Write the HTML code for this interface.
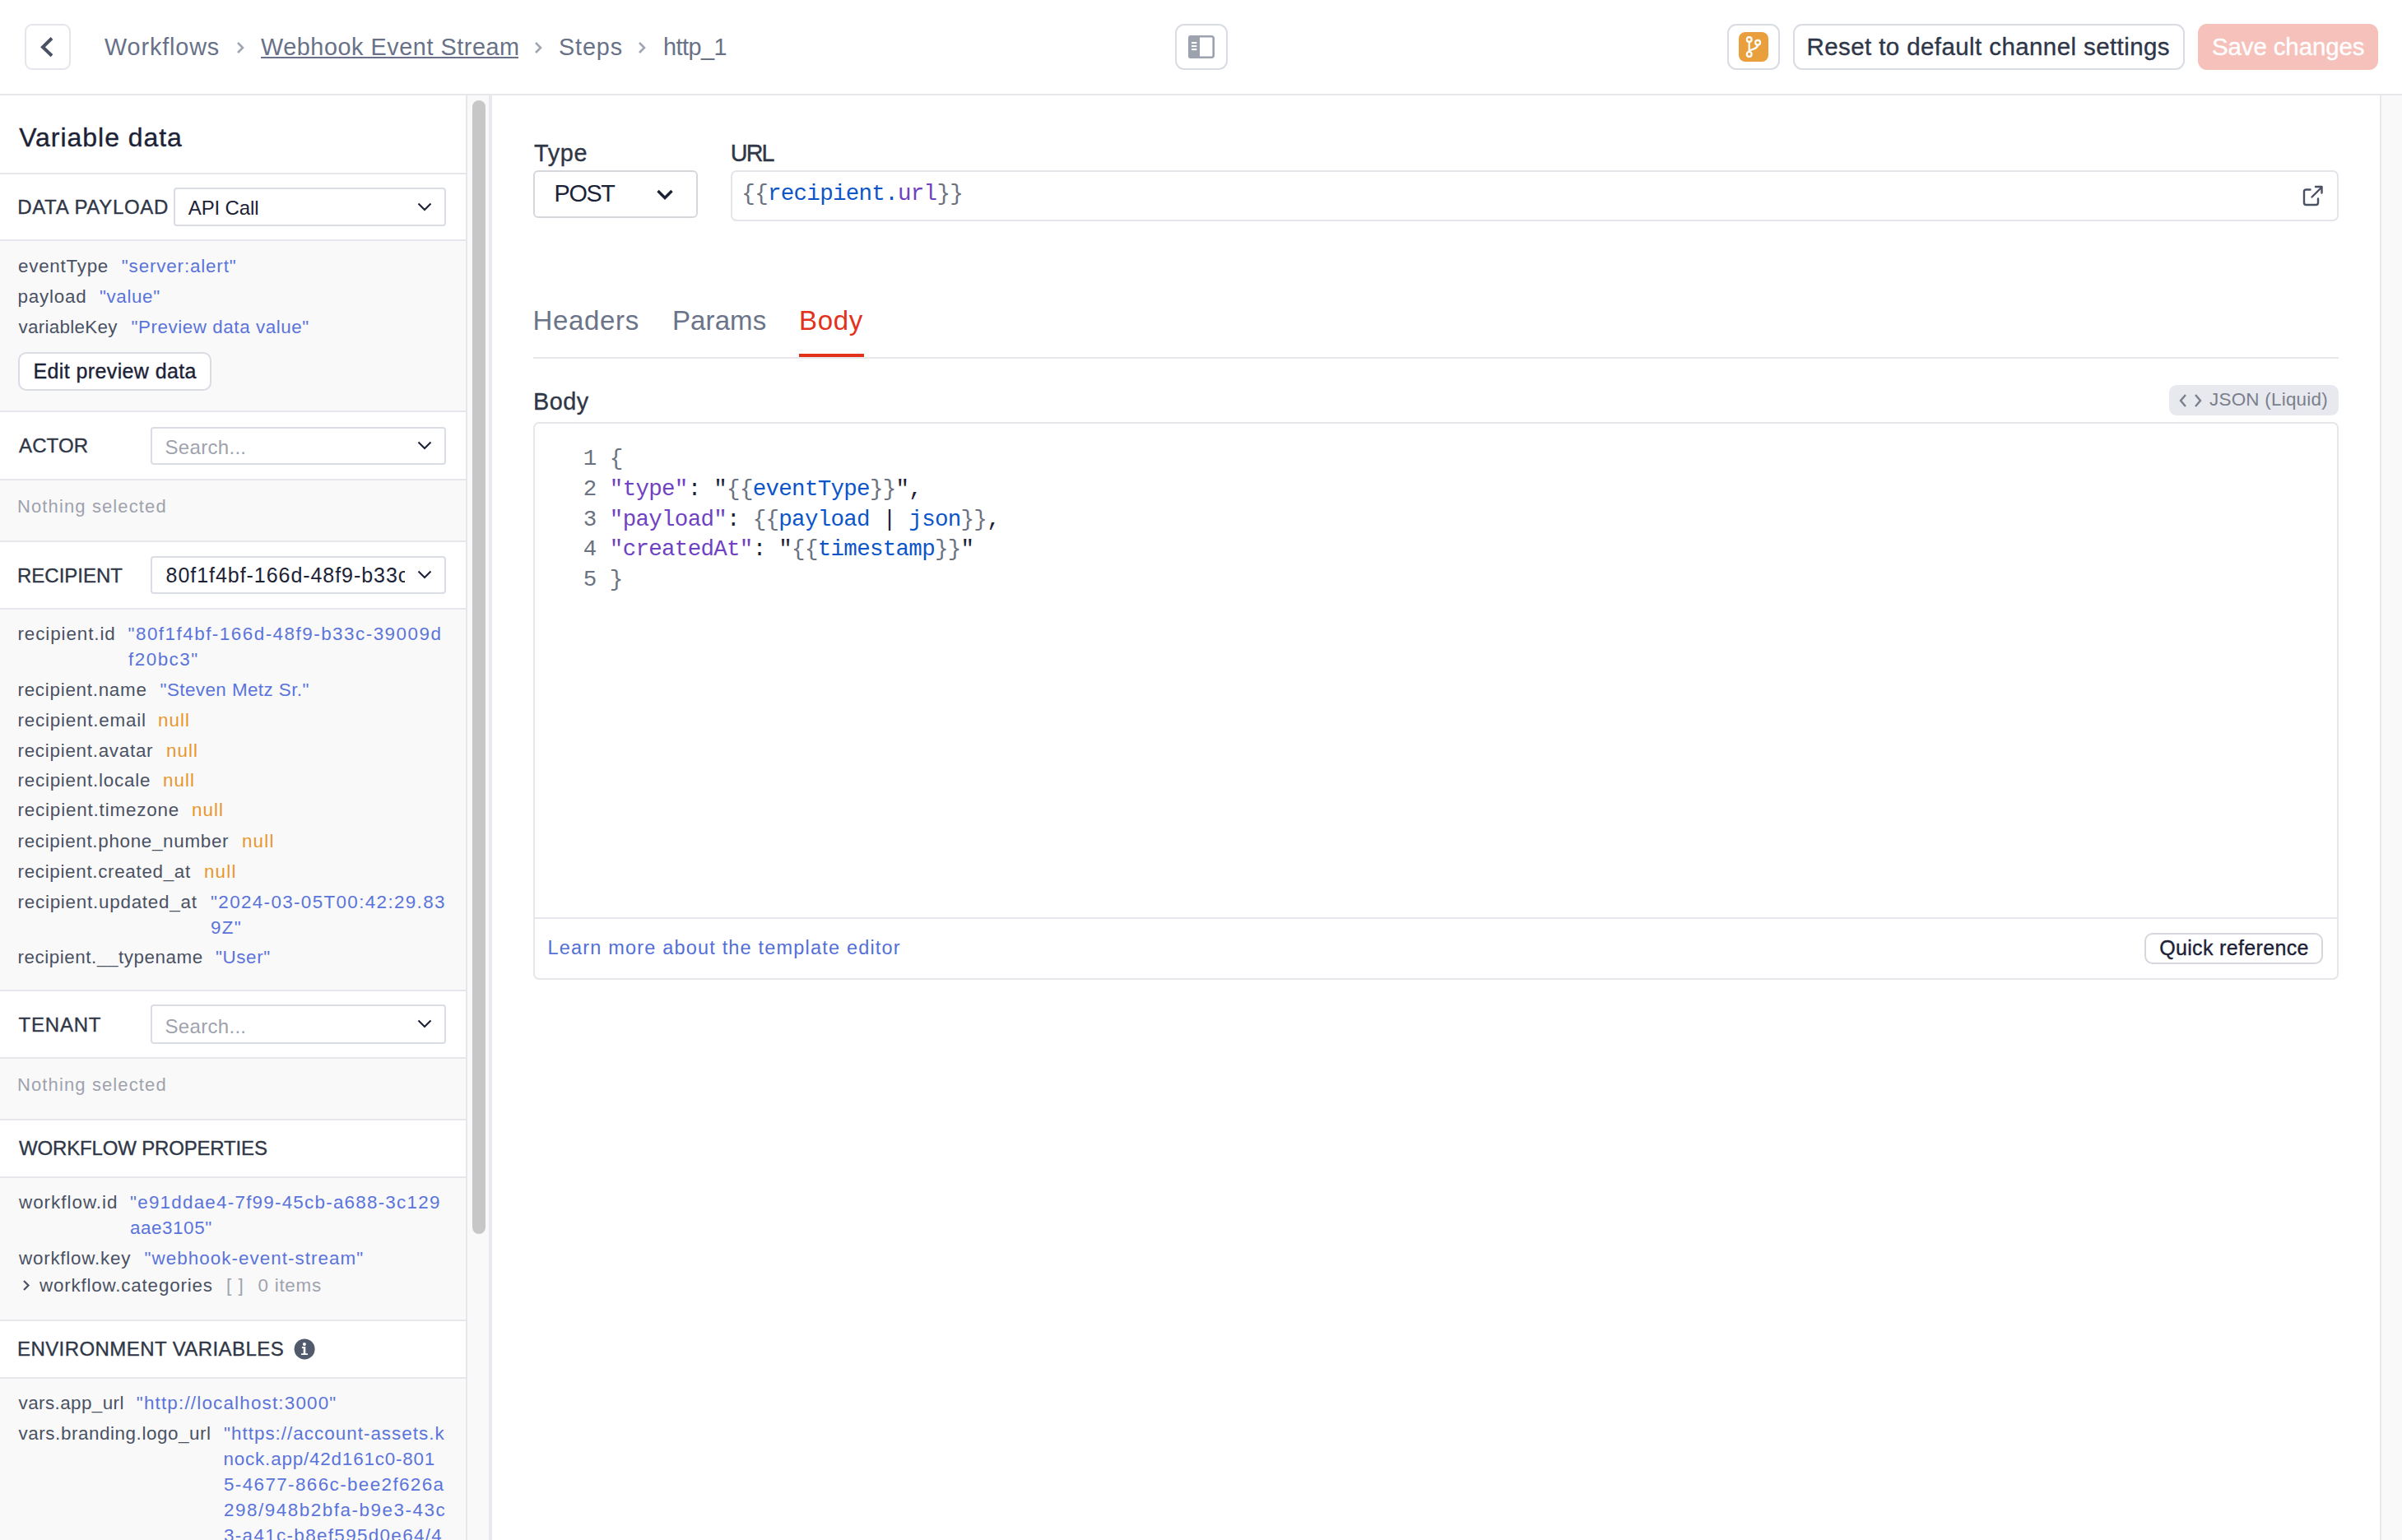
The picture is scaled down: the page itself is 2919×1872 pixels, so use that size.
<!DOCTYPE html>
<html><head><meta charset="utf-8"><title>http_1</title>
<style>
html,body{margin:0;padding:0;}
body{width:2919px;height:1872px;position:relative;overflow:hidden;background:#fff;font-family:"Liberation Sans",sans-serif;}
.a{position:absolute;}
.bb{box-sizing:border-box;}
.t{white-space:pre;}
</style></head><body>
<div class="a bb" style="left:0px;top:114px;width:2919px;height:2px;background:#e5e7eb;"></div>
<div class="a bb" style="left:30px;top:29px;width:56px;height:56px;border:2px solid #e4e6eb;border-radius:9px;"></div>
<svg class="a" style="left:0;top:0" width="120" height="120"><polyline points="63,46.5 52,57.2 63,67.8" fill="none" stroke="#4a5163" stroke-width="4"/></svg>
<div class="a t" style="left:127.00px;top:39.02px;font-size:28.8px;line-height:36px;color:#687187;letter-spacing:0.875px;font-weight:400;font-family:'Liberation Sans',sans-serif;">Workflows</div>
<div class="a t" style="left:317.00px;top:39.02px;font-size:28.8px;line-height:36px;color:#687187;letter-spacing:0.553px;font-weight:400;font-family:'Liberation Sans',sans-serif;">Webhook Event Stream</div>
<div class="a bb" style="left:317px;top:69px;width:313px;height:2px;background:#687187;"></div>
<div class="a t" style="left:679.00px;top:39.02px;font-size:28.8px;line-height:36px;color:#687187;letter-spacing:0.875px;font-weight:400;font-family:'Liberation Sans',sans-serif;">Steps</div>
<div class="a t" style="left:806.00px;top:39.02px;font-size:28.8px;line-height:36px;color:#687187;letter-spacing:-0.500px;font-weight:400;font-family:'Liberation Sans',sans-serif;">http_1</div>
<svg class="a" style="left:286px;top:48px" width="16" height="20"><polyline points="3,4 9,10 3,16" fill="none" stroke="#a0a6b1" stroke-width="2.6"/></svg>
<svg class="a" style="left:648px;top:48px" width="16" height="20"><polyline points="3,4 9,10 3,16" fill="none" stroke="#a0a6b1" stroke-width="2.6"/></svg>
<svg class="a" style="left:774px;top:48px" width="16" height="20"><polyline points="3,4 9,10 3,16" fill="none" stroke="#a0a6b1" stroke-width="2.6"/></svg>
<div class="a bb" style="left:1428px;top:29px;width:64px;height:56px;border:2px solid #d9dce3;border-radius:11px;"></div>
<svg class="a" style="left:1440px;top:40px" width="40" height="34" viewBox="0 0 40 34">
<rect x="5.3" y="4.3" width="29.4" height="25.4" rx="2.5" fill="none" stroke="#9ca3af" stroke-width="2.6"/>
<rect x="4" y="3" width="14" height="28" rx="3" fill="#9ca3af"/>
<rect x="8" y="11" width="6.3" height="2.1" fill="#fff"/><rect x="8" y="15" width="6.3" height="2.1" fill="#fff"/><rect x="8" y="19" width="6.3" height="2.1" fill="#fff"/>
</svg>
<div class="a bb" style="left:2099px;top:29px;width:64px;height:56px;border:2px solid #d9dce3;border-radius:11px;"></div>
<div class="a bb" style="left:2113px;top:39px;width:36px;height:36px;background:#e9a03c;border-radius:8px;"></div>
<svg class="a" style="left:2113px;top:39px" width="36" height="36" viewBox="0 0 36 36">
<g fill="none" stroke="#fff" stroke-width="2.2">
<circle cx="12.7" cy="9" r="2.9"/><circle cx="23.1" cy="12.7" r="2.9"/><circle cx="12.7" cy="26.9" r="2.9"/>
<path d="M12.7 11.9 V24"/><path d="M23.1 15.6 C23.1 20 18 20.5 12.7 22.5"/>
</g></svg>
<div class="a bb" style="left:2179px;top:29px;width:476px;height:56px;border:2px solid #d9dce3;border-radius:11px;"></div>
<div class="a t" style="left:2195.50px;top:38.28px;font-size:29.5px;line-height:37px;color:#2e3648;letter-spacing:0.406px;font-weight:400;font-family:'Liberation Sans',sans-serif;-webkit-text-stroke:0.35px #2e3648;">Reset to default channel settings</div>
<div class="a bb" style="left:2671px;top:29px;width:219px;height:56px;background:#f7c1bb;border-radius:11px;"></div>
<div class="a t" style="left:2688.00px;top:38.28px;font-size:29.5px;line-height:37px;color:#ffffff;letter-spacing:-0.136px;font-weight:400;font-family:'Liberation Sans',sans-serif;-webkit-text-stroke:0.35px #ffffff;">Save changes</div>
<div class="a bb" style="left:566px;top:116px;width:2px;height:1756px;background:#e5e7eb;"></div>
<div class="a bb" style="left:568px;top:116px;width:26px;height:1756px;background:#f9f9f9;"></div>
<div class="a bb" style="left:594px;top:116px;width:4px;height:1756px;background:#e9eaee;"></div>
<div class="a bb" style="left:574px;top:122px;width:16px;height:1378px;background:#c6c7c6;border-radius:8px;"></div>
<div class="a bb" style="left:2892px;top:116px;width:2px;height:1756px;background:#e9eaee;"></div>
<div class="a bb" style="left:2894px;top:116px;width:25px;height:1756px;background:#f9f9fa;"></div>
<div class="a bb" style="left:0px;top:293px;width:566px;height:207px;background:#f9f9fa;"></div>
<div class="a bb" style="left:0px;top:584px;width:566px;height:74px;background:#f9f9fa;"></div>
<div class="a bb" style="left:0px;top:741px;width:566px;height:463px;background:#f9f9fa;"></div>
<div class="a bb" style="left:0px;top:1287px;width:566px;height:74px;background:#f9f9fa;"></div>
<div class="a bb" style="left:0px;top:1432px;width:566px;height:173px;background:#f9f9fa;"></div>
<div class="a bb" style="left:0px;top:1676px;width:566px;height:196px;background:#f9f9fa;"></div>
<div class="a bb" style="left:0px;top:210px;width:566px;height:2px;background:#e5e7eb;"></div>
<div class="a bb" style="left:0px;top:291px;width:566px;height:2px;background:#e5e7eb;"></div>
<div class="a bb" style="left:0px;top:499px;width:566px;height:2px;background:#e5e7eb;"></div>
<div class="a bb" style="left:0px;top:582px;width:566px;height:2px;background:#e5e7eb;"></div>
<div class="a bb" style="left:0px;top:657px;width:566px;height:2px;background:#e5e7eb;"></div>
<div class="a bb" style="left:0px;top:739px;width:566px;height:2px;background:#e5e7eb;"></div>
<div class="a bb" style="left:0px;top:1203px;width:566px;height:2px;background:#e5e7eb;"></div>
<div class="a bb" style="left:0px;top:1285px;width:566px;height:2px;background:#e5e7eb;"></div>
<div class="a bb" style="left:0px;top:1360px;width:566px;height:2px;background:#e5e7eb;"></div>
<div class="a bb" style="left:0px;top:1430px;width:566px;height:2px;background:#e5e7eb;"></div>
<div class="a bb" style="left:0px;top:1604px;width:566px;height:2px;background:#e5e7eb;"></div>
<div class="a bb" style="left:0px;top:1674px;width:566px;height:2px;background:#e5e7eb;"></div>
<div class="a t" style="left:23.20px;top:146.91px;font-size:32px;line-height:40px;color:#1c2236;letter-spacing:0.958px;font-weight:400;font-family:'Liberation Sans',sans-serif;-webkit-text-stroke:0.35px #1c2236;">Variable data</div>
<div class="a t" style="left:21.20px;top:236.68px;font-size:24px;line-height:30px;color:#2f3747;letter-spacing:0.682px;font-weight:400;font-family:'Liberation Sans',sans-serif;-webkit-text-stroke:0.35px #2f3747;">DATA PAYLOAD</div>
<div class="a bb" style="left:211px;top:228px;width:331px;height:47px;background:#fff;border:2px solid #dadde3;border-radius:4px;"></div>
<svg class="a" style="left:504px;top:241.5px" width="24" height="20"><polyline points="4.5,5.5 12,13 19.5,5.5" fill="none" stroke="#1c2236" stroke-width="2.1"/></svg>
<div class="a t" style="left:228.80px;top:237.68px;font-size:24px;line-height:30px;color:#1c2236;letter-spacing:-0.143px;font-weight:400;font-family:'Liberation Sans',sans-serif;">API Call</div>
<div class="a t" style="left:22.00px;top:310.24px;font-size:22.4px;line-height:28px;color:#4a5163;letter-spacing:0.750px;font-weight:400;font-family:'Liberation Sans',sans-serif;">eventType</div>
<div class="a t" style="left:147.80px;top:310.24px;font-size:22.4px;line-height:28px;color:#5b74d9;letter-spacing:0.846px;font-weight:400;font-family:'Liberation Sans',sans-serif;">"server:alert"</div>
<div class="a t" style="left:21.50px;top:346.74px;font-size:22.4px;line-height:28px;color:#4a5163;letter-spacing:0.783px;font-weight:400;font-family:'Liberation Sans',sans-serif;">payload</div>
<div class="a t" style="left:120.90px;top:346.74px;font-size:22.4px;line-height:28px;color:#5b74d9;letter-spacing:0.633px;font-weight:400;font-family:'Liberation Sans',sans-serif;">"value"</div>
<div class="a t" style="left:22.50px;top:383.54px;font-size:22.4px;line-height:28px;color:#4a5163;letter-spacing:0.290px;font-weight:400;font-family:'Liberation Sans',sans-serif;">variableKey</div>
<div class="a t" style="left:159.50px;top:383.54px;font-size:22.4px;line-height:28px;color:#5b74d9;letter-spacing:0.558px;font-weight:400;font-family:'Liberation Sans',sans-serif;">"Preview data value"</div>
<div class="a bb" style="left:22px;top:428px;width:235px;height:47px;background:#fff;border:2px solid #d9dce3;border-radius:10px;"></div>
<div class="a t" style="left:40.50px;top:435.84px;font-size:25px;line-height:31px;color:#1c2236;letter-spacing:0.387px;font-weight:400;font-family:'Liberation Sans',sans-serif;-webkit-text-stroke:0.35px #1c2236;">Edit preview data</div>
<div class="a t" style="left:23.00px;top:526.68px;font-size:24px;line-height:30px;color:#2f3747;letter-spacing:0.125px;font-weight:400;font-family:'Liberation Sans',sans-serif;-webkit-text-stroke:0.35px #2f3747;">ACTOR</div>
<div class="a bb" style="left:183px;top:519px;width:359px;height:46px;background:#fff;border:2px solid #dadde3;border-radius:4px;"></div>
<svg class="a" style="left:504px;top:532.0px" width="24" height="20"><polyline points="4.5,5.5 12,13 19.5,5.5" fill="none" stroke="#1c2236" stroke-width="2.1"/></svg>
<div class="a t" style="left:200.50px;top:528.68px;font-size:24px;line-height:30px;color:#9fa3ad;letter-spacing:0.312px;font-weight:400;font-family:'Liberation Sans',sans-serif;">Search...</div>
<div class="a t" style="left:21.00px;top:602.38px;font-size:22px;line-height:28px;color:#9fa3ad;letter-spacing:1.117px;font-weight:400;font-family:'Liberation Sans',sans-serif;">Nothing selected</div>
<div class="a t" style="left:21.00px;top:684.68px;font-size:24px;line-height:30px;color:#2f3747;letter-spacing:0.000px;font-weight:400;font-family:'Liberation Sans',sans-serif;-webkit-text-stroke:0.35px #2f3747;">RECIPIENT</div>
<div class="a bb" style="left:183px;top:676px;width:359px;height:46px;background:#fff;border:2px solid #dadde3;border-radius:4px;"></div>
<svg class="a" style="left:504px;top:689.0px" width="24" height="20"><polyline points="4.5,5.5 12,13 19.5,5.5" fill="none" stroke="#1c2236" stroke-width="2.1"/></svg>
<div class="a" style="left:185px;top:678px;width:307px;height:42px;overflow:hidden">
<div class="a t" style="left:16.60px;top:5.84px;font-size:25px;line-height:31px;color:#1c2236;letter-spacing:0.950px;font-weight:400;font-family:'Liberation Sans',sans-serif;">80f1f4bf-166d-48f9-b33c-39009df20bc3</div>
</div>
<div class="a t" style="left:21.50px;top:757.14px;font-size:22.4px;line-height:28px;color:#4a5163;letter-spacing:0.909px;font-weight:400;font-family:'Liberation Sans',sans-serif;">recipient.id</div>
<div class="a t" style="left:155.50px;top:757.14px;font-size:22.4px;line-height:28px;color:#5b74d9;letter-spacing:1.500px;font-weight:400;font-family:'Liberation Sans',sans-serif;">"80f1f4bf-166d-48f9-b33c-39009d</div>
<div class="a t" style="left:156.00px;top:788.14px;font-size:22.4px;line-height:28px;color:#5b74d9;letter-spacing:1.500px;font-weight:400;font-family:'Liberation Sans',sans-serif;">f20bc3"</div>
<div class="a t" style="left:21.50px;top:825.24px;font-size:22.4px;line-height:28px;color:#4a5163;letter-spacing:0.731px;font-weight:400;font-family:'Liberation Sans',sans-serif;">recipient.name</div>
<div class="a t" style="left:194.50px;top:825.24px;font-size:22.4px;line-height:28px;color:#5b74d9;letter-spacing:0.438px;font-weight:400;font-family:'Liberation Sans',sans-serif;">"Steven Metz Sr."</div>
<div class="a t" style="left:21.50px;top:861.84px;font-size:22.4px;line-height:28px;color:#4a5163;letter-spacing:0.786px;font-weight:400;font-family:'Liberation Sans',sans-serif;">recipient.email</div>
<div class="a t" style="left:192.00px;top:861.84px;font-size:22.4px;line-height:28px;color:#e8962e;letter-spacing:1.000px;font-weight:400;font-family:'Liberation Sans',sans-serif;">null</div>
<div class="a t" style="left:21.50px;top:898.74px;font-size:22.4px;line-height:28px;color:#4a5163;letter-spacing:0.733px;font-weight:400;font-family:'Liberation Sans',sans-serif;">recipient.avatar</div>
<div class="a t" style="left:202.00px;top:898.74px;font-size:22.4px;line-height:28px;color:#e8962e;letter-spacing:1.000px;font-weight:400;font-family:'Liberation Sans',sans-serif;">null</div>
<div class="a t" style="left:21.50px;top:934.84px;font-size:22.4px;line-height:28px;color:#4a5163;letter-spacing:0.767px;font-weight:400;font-family:'Liberation Sans',sans-serif;">recipient.locale</div>
<div class="a t" style="left:198.00px;top:934.84px;font-size:22.4px;line-height:28px;color:#e8962e;letter-spacing:1.000px;font-weight:400;font-family:'Liberation Sans',sans-serif;">null</div>
<div class="a t" style="left:21.50px;top:971.34px;font-size:22.4px;line-height:28px;color:#4a5163;letter-spacing:0.824px;font-weight:400;font-family:'Liberation Sans',sans-serif;">recipient.timezone</div>
<div class="a t" style="left:233.00px;top:971.34px;font-size:22.4px;line-height:28px;color:#e8962e;letter-spacing:1.000px;font-weight:400;font-family:'Liberation Sans',sans-serif;">null</div>
<div class="a t" style="left:21.50px;top:1008.94px;font-size:22.4px;line-height:28px;color:#4a5163;letter-spacing:0.690px;font-weight:400;font-family:'Liberation Sans',sans-serif;">recipient.phone_number</div>
<div class="a t" style="left:294.00px;top:1008.94px;font-size:22.4px;line-height:28px;color:#e8962e;letter-spacing:1.167px;font-weight:400;font-family:'Liberation Sans',sans-serif;">null</div>
<div class="a t" style="left:21.50px;top:1045.74px;font-size:22.4px;line-height:28px;color:#4a5163;letter-spacing:0.684px;font-weight:400;font-family:'Liberation Sans',sans-serif;">recipient.created_at</div>
<div class="a t" style="left:248.00px;top:1045.74px;font-size:22.4px;line-height:28px;color:#e8962e;letter-spacing:1.167px;font-weight:400;font-family:'Liberation Sans',sans-serif;">null</div>
<div class="a t" style="left:21.50px;top:1083.04px;font-size:22.4px;line-height:28px;color:#4a5163;letter-spacing:0.763px;font-weight:400;font-family:'Liberation Sans',sans-serif;">recipient.updated_at</div>
<div class="a t" style="left:256.00px;top:1083.04px;font-size:22.4px;line-height:28px;color:#5b74d9;letter-spacing:1.364px;font-weight:400;font-family:'Liberation Sans',sans-serif;">"2024-03-05T00:42:29.83</div>
<div class="a t" style="left:256.00px;top:1114.04px;font-size:22.4px;line-height:28px;color:#5b74d9;letter-spacing:1.250px;font-weight:400;font-family:'Liberation Sans',sans-serif;">9Z"</div>
<div class="a t" style="left:21.50px;top:1150.04px;font-size:22.4px;line-height:28px;color:#4a5163;letter-spacing:0.553px;font-weight:400;font-family:'Liberation Sans',sans-serif;">recipient.__typename</div>
<div class="a t" style="left:262.00px;top:1150.04px;font-size:22.4px;line-height:28px;color:#5b74d9;letter-spacing:0.600px;font-weight:400;font-family:'Liberation Sans',sans-serif;">"User"</div>
<div class="a t" style="left:22.50px;top:1230.68px;font-size:24px;line-height:30px;color:#2f3747;letter-spacing:0.800px;font-weight:400;font-family:'Liberation Sans',sans-serif;-webkit-text-stroke:0.35px #2f3747;">TENANT</div>
<div class="a bb" style="left:183px;top:1221px;width:359px;height:48px;background:#fff;border:2px solid #dadde3;border-radius:4px;"></div>
<svg class="a" style="left:504px;top:1235.0px" width="24" height="20"><polyline points="4.5,5.5 12,13 19.5,5.5" fill="none" stroke="#1c2236" stroke-width="2.1"/></svg>
<div class="a t" style="left:200.50px;top:1232.68px;font-size:24px;line-height:30px;color:#9fa3ad;letter-spacing:0.312px;font-weight:400;font-family:'Liberation Sans',sans-serif;">Search...</div>
<div class="a t" style="left:21.00px;top:1305.38px;font-size:22px;line-height:28px;color:#9fa3ad;letter-spacing:1.117px;font-weight:400;font-family:'Liberation Sans',sans-serif;">Nothing selected</div>
<div class="a t" style="left:23.00px;top:1380.68px;font-size:24px;line-height:30px;color:#2f3747;letter-spacing:-0.167px;font-weight:400;font-family:'Liberation Sans',sans-serif;-webkit-text-stroke:0.35px #2f3747;">WORKFLOW PROPERTIES</div>
<div class="a t" style="left:23.00px;top:1448.34px;font-size:22.4px;line-height:28px;color:#4a5163;letter-spacing:1.000px;font-weight:400;font-family:'Liberation Sans',sans-serif;">workflow.id</div>
<div class="a t" style="left:158.00px;top:1448.34px;font-size:22.4px;line-height:28px;color:#5b74d9;letter-spacing:1.241px;font-weight:400;font-family:'Liberation Sans',sans-serif;">"e91ddae4-7f99-45cb-a688-3c129</div>
<div class="a t" style="left:158.00px;top:1479.24px;font-size:22.4px;line-height:28px;color:#5b74d9;letter-spacing:0.571px;font-weight:400;font-family:'Liberation Sans',sans-serif;">aae3105"</div>
<div class="a t" style="left:23.00px;top:1516.34px;font-size:22.4px;line-height:28px;color:#4a5163;letter-spacing:0.773px;font-weight:400;font-family:'Liberation Sans',sans-serif;">workflow.key</div>
<div class="a t" style="left:175.50px;top:1516.34px;font-size:22.4px;line-height:28px;color:#5b74d9;letter-spacing:1.048px;font-weight:400;font-family:'Liberation Sans',sans-serif;">"webhook-event-stream"</div>
<svg class="a" style="left:22px;top:1552px" width="20" height="22"><polyline points="7,5 12.5,10.5 7,16" fill="none" stroke="#4a5163" stroke-width="2.2"/></svg>
<div class="a t" style="left:48.00px;top:1549.04px;font-size:22.4px;line-height:28px;color:#4a5163;letter-spacing:0.806px;font-weight:400;font-family:'Liberation Sans',sans-serif;">workflow.categories</div>
<div class="a t" style="left:275.00px;top:1549.04px;font-size:22.4px;line-height:28px;color:#9fa3ad;letter-spacing:1.000px;font-weight:400;font-family:'Liberation Sans',sans-serif;">[ ]</div>
<div class="a t" style="left:313.50px;top:1549.04px;font-size:22.4px;line-height:28px;color:#9fa3ad;letter-spacing:0.750px;font-weight:400;font-family:'Liberation Sans',sans-serif;">0 items</div>
<div class="a t" style="left:21.00px;top:1624.68px;font-size:24px;line-height:30px;color:#2f3747;letter-spacing:0.425px;font-weight:400;font-family:'Liberation Sans',sans-serif;-webkit-text-stroke:0.35px #2f3747;">ENVIRONMENT VARIABLES</div>
<svg class="a" style="left:350px;top:1620px" width="40" height="40" viewBox="0 0 40 40">
<circle cx="20.1" cy="19.9" r="12.5" fill="#525a6d"/>
<circle cx="19.9" cy="14.1" r="2" fill="#fff"/>
<path d="M16.9 17.1 H21.3 V25.2 H24 V27 H16 V25.2 H18.7 V19 H16.9 Z" fill="#fff"/>
</svg>
<div class="a t" style="left:22.50px;top:1692.24px;font-size:22.4px;line-height:28px;color:#4a5163;letter-spacing:0.432px;font-weight:400;font-family:'Liberation Sans',sans-serif;">vars.app_url</div>
<div class="a t" style="left:165.75px;top:1692.24px;font-size:22.4px;line-height:28px;color:#5b74d9;letter-spacing:1.193px;font-weight:400;font-family:'Liberation Sans',sans-serif;">"http://localhost:3000"</div>
<div class="a t" style="left:22.50px;top:1729.04px;font-size:22.4px;line-height:28px;color:#4a5163;letter-spacing:0.571px;font-weight:400;font-family:'Liberation Sans',sans-serif;">vars.branding.logo_url</div>
<div class="a t" style="left:272.00px;top:1729.04px;font-size:22.4px;line-height:28px;color:#5b74d9;letter-spacing:1.021px;font-weight:400;font-family:'Liberation Sans',sans-serif;">"https://account-assets.k</div>
<div class="a t" style="left:271.50px;top:1760.04px;font-size:22.4px;line-height:28px;color:#5b74d9;letter-spacing:0.825px;font-weight:400;font-family:'Liberation Sans',sans-serif;">nock.app/42d161c0-801</div>
<div class="a t" style="left:272.00px;top:1791.04px;font-size:22.4px;line-height:28px;color:#5b74d9;letter-spacing:1.400px;font-weight:400;font-family:'Liberation Sans',sans-serif;">5-4677-866c-bee2f626a</div>
<div class="a t" style="left:272.00px;top:1822.04px;font-size:22.4px;line-height:28px;color:#5b74d9;letter-spacing:1.550px;font-weight:400;font-family:'Liberation Sans',sans-serif;">298/948b2bfa-b9e3-43c</div>
<div class="a t" style="left:272.00px;top:1853.04px;font-size:22.4px;line-height:28px;color:#5b74d9;letter-spacing:1.350px;font-weight:400;font-family:'Liberation Sans',sans-serif;">3-a41c-b8ef595d0e64/4</div>
<div class="a t" style="left:649.00px;top:168.02px;font-size:28.8px;line-height:36px;color:#2f3747;letter-spacing:0.667px;font-weight:400;font-family:'Liberation Sans',sans-serif;-webkit-text-stroke:0.35px #2f3747;">Type</div>
<div class="a t" style="left:887.75px;top:168.02px;font-size:28.8px;line-height:36px;color:#2f3747;letter-spacing:-1.875px;font-weight:400;font-family:'Liberation Sans',sans-serif;-webkit-text-stroke:0.35px #2f3747;">URL</div>
<div class="a bb" style="left:648px;top:207px;width:200px;height:58px;background:#fff;border:2px solid #d5d7dd;border-radius:6px;"></div>
<div class="a t" style="left:673.60px;top:217.42px;font-size:28.8px;line-height:36px;color:#1c2236;letter-spacing:-1.367px;font-weight:400;font-family:'Liberation Sans',sans-serif;">POST</div>
<svg class="a" style="left:795px;top:226px" width="26" height="22"><polyline points="4.5,6 13,14.5 21.5,6" fill="none" stroke="#1c2236" stroke-width="3.4"/></svg>
<div class="a bb" style="left:888px;top:207px;width:1954px;height:62px;background:#fff;border:2px solid #e3e5ea;border-radius:7px;"></div>
<div class="a m" style="left:901.35px;top:218.97px;font-family:'Liberation Mono',monospace;font-size:27.5px;line-height:34px;letter-spacing:-0.700px;white-space:pre"><span style="color:#6b7280">{{</span><span style="color:#0b55c8">recipient.</span><span style="color:#6f42c1">url</span><span style="color:#6b7280">}}</span></div>
<svg class="a" style="left:2794px;top:222px" width="32" height="32" viewBox="0 0 32 32">
<g fill="none" stroke="#4a5163" stroke-width="2.4" stroke-linecap="round" stroke-linejoin="round">
<path d="M13.5 8.5 H8.5 Q6 8.5 6 11 V24.5 Q6 27 8.5 27 H20.5 Q23 27 23 24.5 V19.5"/>
<path d="M15.5 17.5 L27 6"/><path d="M20 5 H27.5 V12.5"/></g></svg>
<div class="a t" style="left:647.50px;top:369.07px;font-size:33px;line-height:41px;color:#6b7489;letter-spacing:0.667px;font-weight:400;font-family:'Liberation Sans',sans-serif;">Headers</div>
<div class="a t" style="left:817.00px;top:369.07px;font-size:33px;line-height:41px;color:#6b7489;letter-spacing:0.100px;font-weight:400;font-family:'Liberation Sans',sans-serif;">Params</div>
<div class="a t" style="left:971.00px;top:369.07px;font-size:33px;line-height:41px;color:#e2321c;letter-spacing:0.667px;font-weight:400;font-family:'Liberation Sans',sans-serif;">Body</div>
<div class="a bb" style="left:648px;top:434px;width:2194px;height:2px;background:#e5e7eb;"></div>
<div class="a bb" style="left:971px;top:430px;width:79px;height:4px;background:#e2321c;"></div>
<div class="a t" style="left:648.00px;top:470.02px;font-size:28.8px;line-height:36px;color:#2f3747;letter-spacing:0.500px;font-weight:400;font-family:'Liberation Sans',sans-serif;-webkit-text-stroke:0.35px #2f3747;">Body</div>
<div class="a bb" style="left:2636px;top:468px;width:206px;height:37px;background:#e8e9ee;border-radius:9px;"></div>
<svg class="a" style="left:2645px;top:476px" width="34" height="22"><g fill="none" stroke="#7a7f8c" stroke-width="2.4"><polyline points="11,4 5,11 11,18"/><polyline points="23,4 29,11 23,18"/></g></svg>
<div class="a t" style="left:2685.00px;top:472.44px;font-size:22.4px;line-height:28px;color:#7a7f8c;letter-spacing:0.258px;font-weight:400;font-family:'Liberation Sans',sans-serif;">JSON (Liquid)</div>
<div class="a bb" style="left:648px;top:513px;width:2194px;height:678px;background:#fff;border:2px solid #e5e7eb;border-radius:7px;"></div>
<div class="a bb" style="left:650px;top:1115px;width:2190px;height:2px;background:#e5e7eb;"></div>
<div class="a m" style="left:708.85px;top:541.47px;font-family:'Liberation Mono',monospace;font-size:27.5px;line-height:34px;letter-spacing:-0.700px;white-space:pre"><span style="color:#6b7280">1</span></div>
<div class="a m" style="left:740.85px;top:541.47px;font-family:'Liberation Mono',monospace;font-size:27.5px;line-height:34px;letter-spacing:-0.700px;white-space:pre"><span style="color:#6b7280">{</span></div>
<div class="a m" style="left:708.85px;top:578.07px;font-family:'Liberation Mono',monospace;font-size:27.5px;line-height:34px;letter-spacing:-0.700px;white-space:pre"><span style="color:#6b7280">2</span></div>
<div class="a m" style="left:740.85px;top:578.07px;font-family:'Liberation Mono',monospace;font-size:27.5px;line-height:34px;letter-spacing:-0.700px;white-space:pre"><span style="color:#6f42c1">"type"</span><span style="color:#1c2236">: </span><span style="color:#1c2236">"</span><span style="color:#6b7280">{{</span><span style="color:#0b55c8">eventType</span><span style="color:#6b7280">}}</span><span style="color:#1c2236">"</span><span style="color:#1c2236">,</span></div>
<div class="a m" style="left:708.85px;top:614.67px;font-family:'Liberation Mono',monospace;font-size:27.5px;line-height:34px;letter-spacing:-0.700px;white-space:pre"><span style="color:#6b7280">3</span></div>
<div class="a m" style="left:740.85px;top:614.67px;font-family:'Liberation Mono',monospace;font-size:27.5px;line-height:34px;letter-spacing:-0.700px;white-space:pre"><span style="color:#6f42c1">"payload"</span><span style="color:#1c2236">: </span><span style="color:#6b7280">{{</span><span style="color:#0b55c8">payload </span><span style="color:#1c2236">|</span><span style="color:#0b55c8"> json</span><span style="color:#6b7280">}}</span><span style="color:#1c2236">,</span></div>
<div class="a m" style="left:708.85px;top:651.27px;font-family:'Liberation Mono',monospace;font-size:27.5px;line-height:34px;letter-spacing:-0.700px;white-space:pre"><span style="color:#6b7280">4</span></div>
<div class="a m" style="left:740.85px;top:651.27px;font-family:'Liberation Mono',monospace;font-size:27.5px;line-height:34px;letter-spacing:-0.700px;white-space:pre"><span style="color:#6f42c1">"createdAt"</span><span style="color:#1c2236">: </span><span style="color:#1c2236">"</span><span style="color:#6b7280">{{</span><span style="color:#0b55c8">timestamp</span><span style="color:#6b7280">}}</span><span style="color:#1c2236">"</span></div>
<div class="a m" style="left:708.85px;top:687.87px;font-family:'Liberation Mono',monospace;font-size:27.5px;line-height:34px;letter-spacing:-0.700px;white-space:pre"><span style="color:#6b7280">5</span></div>
<div class="a m" style="left:740.85px;top:687.87px;font-family:'Liberation Mono',monospace;font-size:27.5px;line-height:34px;letter-spacing:-0.700px;white-space:pre"><span style="color:#6b7280">}</span></div>
<div class="a t" style="left:665.50px;top:1138.36px;font-size:23.5px;line-height:29px;color:#5470d6;letter-spacing:1.183px;font-weight:400;font-family:'Liberation Sans',sans-serif;">Learn more about the template editor</div>
<div class="a bb" style="left:2606px;top:1134px;width:217px;height:38px;background:#fff;border:2px solid #d5d7dd;border-radius:10px;"></div>
<div class="a t" style="left:2624.20px;top:1137.14px;font-size:25px;line-height:31px;color:#1c2236;letter-spacing:0.343px;font-weight:400;font-family:'Liberation Sans',sans-serif;-webkit-text-stroke:0.35px #1c2236;">Quick reference</div>
</body></html>
